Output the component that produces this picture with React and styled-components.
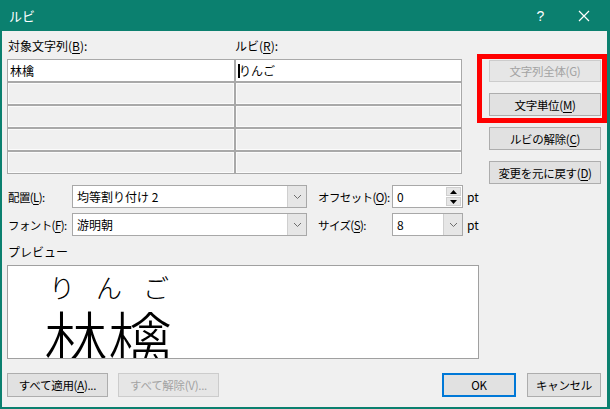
import React from "react";
import styled, { createGlobalStyle } from "styled-components";

const GlobalStyle = createGlobalStyle`
  html, body {
    margin: 0;
    padding: 0;
    background: #ffffff;
  }
  body {
    font-family: "Noto Sans CJK JP", "Noto Sans", sans-serif;
    font-size: 12px;
    color: #000;
  }
`;

const Window = styled.div`
  width: 610px;
  height: 409px;
  display: flex;
  flex-direction: column;
  overflow: hidden;
`;

const TitleBar = styled.div`
  height: 31px;
  flex: none;
  background: #0b806f;
  color: #fff;
  display: flex;
  align-items: center;
  padding-right: 5px;
`;

const Title = styled.span`
  padding-left: 9px;
  font-size: 13px;
  flex: 1;
`;

const TitleBtn = styled.div`
  width: 43px;
  height: 31px;
  display: flex;
  align-items: center;
  justify-content: center;
  font-family: "Liberation Sans", sans-serif;
  font-size: 14px;
`;

const Frame = styled.div`
  flex: 1;
  position: relative;
  background: #f0f0f0;
  border-left: 2px solid #0b806f;
  border-right: 3px solid #0b806f;
  border-bottom: 2px solid #0b806f;
  padding-left: 5px;
  display: flex;
  flex-direction: column;
`;

const TopSection = styled.div`
  display: flex;
  height: 143px;
  flex: none;
`;

const LeftCol = styled.div`
  width: 455px;
  display: flex;
  flex-direction: column;
`;

const HeadRow = styled.div`
  height: 28px;
  display: grid;
  grid-template-columns: 227px 227px;
  padding-top: 7px;
  box-sizing: border-box;
  line-height: 16px;
`;

const HeadLabel = styled.span`
  padding-left: 1px;
  white-space: nowrap;
`;

const Key = styled.u`
  text-underline-offset: 2px;
`;

const RubyGrid = styled.div`
  display: grid;
  grid-template-columns: 226px 225px;
  grid-auto-rows: 21px;
  gap: 2px;
  background: #a9a9a9;
  border: 1px solid #a9a9a9;
`;

const Cell = styled.div`
  background: ${({ $active }) => ($active ? "#ffffff" : "#f0f0f0")};
  box-shadow: ${({ $active }) => ($active ? "none" : "inset 0 0 0 1px #fbfbfb")};
  display: flex;
  align-items: center;
  padding-left: 2px;
  line-height: 16px;
`;

const Caret = styled.span`
  display: inline-block;
  width: 2px;
  height: 14px;
  background: #000;
  margin-right: -1px;
`;

const RightCol = styled.div`
  margin-left: 27px;
  padding-top: 29px;
  display: flex;
  flex-direction: column;
  gap: 11px;
`;

const Button = styled.button`
  flex: none;
  width: ${({ $w }) => $w}px;
  height: ${({ $h }) => $h || 23}px;
  box-sizing: border-box;
  margin: 0;
  padding: 0;
  white-space: nowrap;
  font-family: "Noto Sans CJK JP", "Noto Sans", sans-serif;
  font-size: 11.5px;
  letter-spacing: -0.3px;
  line-height: 16px;
  color: ${({ disabled }) => (disabled ? "#a3a3a3" : "#000")};
  background: ${({ disabled }) => (disabled ? "#e6e6e6" : "#e1e1e1")};
  border: ${({ $primary, disabled }) =>
    $primary ? "2px solid #0078d7" : disabled ? "1px solid #cccccc" : "1px solid #adadad"};
`;

const RedMark = styled.div`
  position: absolute;
  left: 475px;
  top: 23px;
  width: 130px;
  height: 69px;
  box-sizing: border-box;
  border: 5px solid #ff0000;
  pointer-events: none;
`;

const Options = styled.div`
  margin-top: 11px;
  display: flex;
  flex-direction: column;
  gap: 5px;
`;

const OptRow = styled.div`
  display: flex;
  align-items: center;
  height: 23px;
`;

const OptLabel = styled.span`
  flex: none;
  width: ${({ $w }) => $w}px;
  padding-left: 1px;
  box-sizing: border-box;
  line-height: 16px;
  white-space: nowrap;
  font-size: 11.5px;
  letter-spacing: -0.6px;
`;

const Field = styled.div`
  flex: none;
  width: ${({ $w }) => $w}px;
  height: 23px;
  box-sizing: border-box;
  background: #fff;
  border: 1px solid #a8a8a8;
  display: flex;
  align-items: stretch;
`;

const FieldText = styled.span`
  flex: 1;
  padding-left: 4px;
  display: flex;
  align-items: center;
  line-height: 16px;
`;

const DropBtn = styled.div`
  width: 18px;
  background: #e6e6e6;
  border-left: 1px solid #cfcfcf;
  display: flex;
  align-items: center;
  justify-content: center;
`;

const Spin = styled.div`
  width: 15px;
  display: flex;
  flex-direction: column;
  gap: 1px;
  padding: 1px 1px 1px 0;
`;

const SpinBtn = styled.div`
  flex: 1;
  background: #e6e6e6;
  border: 1px solid #cfcfcf;
  display: flex;
  align-items: center;
  justify-content: center;
`;

const Gap = styled.div`
  flex: none;
  width: ${({ $w }) => $w}px;
`;

const Unit = styled.span`
  margin-left: 4px;
  line-height: 16px;
`;

const PreviewLabel = styled.div`
  margin-top: 8px;
  height: 16px;
  line-height: 16px;
  padding-left: 1px;
`;

const PreviewBox = styled.div`
  margin-top: 5px;
  width: 472px;
  height: 94px;
  flex: none;
  box-sizing: border-box;
  background: #fff;
  border: 1px solid #a0a0a0;
  overflow: hidden;
  padding: 8px 0 0 36px;
  font-family: "Noto Sans CJK JP", sans-serif;
`;

const RubyText = styled.div`
  width: 130px;
  box-sizing: border-box;
  padding: 0 5px;
  display: flex;
  justify-content: space-between;
  font-size: 26px;
  line-height: 26px;
  font-weight: 300;
`;

const BaseText = styled.div`
  margin-top: 5px;
  font-size: 64px;
  line-height: 64px;
  font-weight: 300;
  white-space: nowrap;
`;

const Footer = styled.div`
  margin-top: 14px;
  display: flex;
  align-items: center;
`;

const Spacer = styled.div`
  flex: 1;
`;

const Chevron = () => (
  <svg width="9" height="6" viewBox="0 0 9 6">
    <path d="M1 1 L4.5 4.5 L8 1" fill="none" stroke="#6d6d6d" strokeWidth="1" />
  </svg>
);

const Tri = ({ up }) => (
  <svg width="7" height="4" viewBox="0 0 7 4">
    <path d={up ? "M0 4 L3.5 0 L7 4 Z" : "M0 0 L3.5 4 L7 0 Z"} fill="#000" />
  </svg>
);

const CloseIcon = () => (
  <svg width="12" height="12" viewBox="0 0 12 12">
    <path d="M1 1 L11 11 M11 1 L1 11" stroke="#fff" strokeWidth="1.2" />
  </svg>
);

const rows = [0, 1, 2, 3, 4];

export default function App() {
  return (
    <>
      <GlobalStyle />
      <Window>
        <TitleBar>
          <Title>ルビ</Title>
          <TitleBtn>?</TitleBtn>
          <TitleBtn>
            <CloseIcon />
          </TitleBtn>
        </TitleBar>
        <Frame>
          <TopSection>
            <LeftCol>
              <HeadRow>
                <HeadLabel>
                  対象文字列(<Key>B</Key>):
                </HeadLabel>
                <HeadLabel>
                  ルビ(<Key>R</Key>):
                </HeadLabel>
              </HeadRow>
              <RubyGrid>
                {rows.map((r) => (
                  <React.Fragment key={r}>
                    <Cell $active={r === 0}>{r === 0 ? "林檎" : ""}</Cell>
                    <Cell $active={r === 0}>
                      {r === 0 ? (
                        <>
                          <Caret />
                          りんご
                        </>
                      ) : (
                        ""
                      )}
                    </Cell>
                  </React.Fragment>
                ))}
              </RubyGrid>
            </LeftCol>
            <RightCol>
              <Button $w={112} $h={22} disabled>
                文字列全体(G)
              </Button>
              <Button $w={112}>
                文字単位(<Key>M</Key>)
              </Button>
              <Button $w={112}>
                ルビの解除(<Key>C</Key>)
              </Button>
              <Button $w={112}>
                変更を元に戻す(<Key>D</Key>)
              </Button>
            </RightCol>
          </TopSection>

          <Options>
            <OptRow>
              <OptLabel $w={65}>
                配置(<Key>L</Key>):
              </OptLabel>
              <Field $w={235}>
                <FieldText>均等割り付け 2</FieldText>
                <DropBtn>
                  <Chevron />
                </DropBtn>
              </Field>
              <Gap $w={10} />
              <OptLabel $w={75}>
                オフセット(<Key>O</Key>):
              </OptLabel>
              <Field $w={71}>
                <FieldText>0</FieldText>
                <Spin>
                  <SpinBtn>
                    <Tri up />
                  </SpinBtn>
                  <SpinBtn>
                    <Tri />
                  </SpinBtn>
                </Spin>
              </Field>
              <Unit>pt</Unit>
            </OptRow>
            <OptRow>
              <OptLabel $w={65}>
                フォント(<Key>F</Key>):
              </OptLabel>
              <Field $w={235}>
                <FieldText>游明朝</FieldText>
                <DropBtn>
                  <Chevron />
                </DropBtn>
              </Field>
              <Gap $w={10} />
              <OptLabel $w={75}>
                サイズ(<Key>S</Key>):
              </OptLabel>
              <Field $w={71}>
                <FieldText>8</FieldText>
                <DropBtn>
                  <Chevron />
                </DropBtn>
              </Field>
              <Unit>pt</Unit>
            </OptRow>
          </Options>

          <PreviewLabel>プレビュー</PreviewLabel>
          <PreviewBox>
            <RubyText>
              <span>り</span>
              <span>ん</span>
              <span>ご</span>
            </RubyText>
            <BaseText>林檎</BaseText>
          </PreviewBox>

          <Footer>
            <Button $w={101} $h={24}>
              すべて適用(<Key>A</Key>)...
            </Button>
            <Gap $w={10} />
            <Button $w={101} $h={24} disabled>
              すべて解除(V)...
            </Button>
            <Spacer />
            <Button $w={74} $h={24} $primary>
              OK
            </Button>
            <Gap $w={11} />
            <Button $w={74} $h={24}>
              キャンセル
            </Button>
            <Gap $w={6} />
          </Footer>
          <RedMark />
        </Frame>
      </Window>
    </>
  );
}
